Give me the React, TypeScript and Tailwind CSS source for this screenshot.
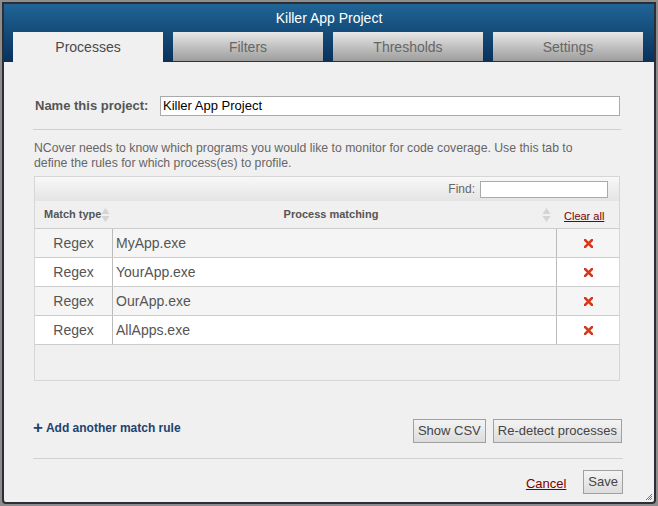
import React from "react";

const rows = ["MyApp.exe", "YourApp.exe", "OurApp.exe", "AllApps.exe"];
const tabs = ["Processes", "Filters", "Thresholds", "Settings"];

function SortArrows({ className = "" }: { className?: string }) {
  return (
    <svg width="9" height="16" viewBox="0 0 9 16" className={className}>
      <path d="M4.5 1 L8.5 7 L0.5 7 Z" fill="#d4d4d4" />
      <path d="M4.5 15 L8.5 9 L0.5 9 Z" fill="#d4d4d4" />
    </svg>
  );
}

function RedX() {
  return (
    <svg width="9" height="9" viewBox="0 0 9 9">
      <path d="M1 1 L8 8 M8 1 L1 8" stroke="#d63a1e" strokeWidth="2.6" strokeLinecap="square" />
    </svg>
  );
}

export default function App() {
  return (
    <div className="w-[658px] h-[506px] bg-[#8d8d8d] pl-[2px] pt-[2px] overflow-hidden" style={{ fontFamily: '"Liberation Sans", Arial, sans-serif' }}>
      <div className="w-[654px] h-[502px] border-2 border-[#2b2f35] rounded-b-[4px] bg-[#f0f0f0] flex flex-col relative overflow-hidden">
        {/* header */}
        <div className="h-[58px] bg-gradient-to-b from-[#1f6596] to-[#0a315c] flex flex-col">
          <div className="h-[28px] flex items-center justify-center text-white text-[14px]">Killer App Project</div>
          <div className="flex gap-[10px] pl-[9px] mt-auto">
            {tabs.map((t, i) => (
              <div
                key={t}
                className={
                  i === 0
                    ? "w-[150px] h-[30px] bg-[#f0f0f0] flex items-center justify-center pt-[1px] text-[14px] text-[#4a4a4a]"
                    : "w-[150px] h-[30px] bg-gradient-to-b from-[#e8e8e8] to-[#9d9d9d] border-b border-[#333] flex items-center justify-center pt-[2px] text-[14px] text-[#666]"
                }
              >
                {t}
              </div>
            ))}
          </div>
        </div>

        {/* body */}
        <div className="flex flex-col pl-[29px] pr-[31px]">
          <div className="flex items-center mt-[34px] pl-[2px]">
            <span className="text-[13px] font-bold text-[#555] w-[125px]">Name this project:</span>
            <div className="w-[460px] h-[20px] bg-white border border-[#aaa] flex items-center px-[2px] text-[13px] text-black">Killer App Project</div>
          </div>

          <div className="h-px bg-[#d0d0d0] mt-[13px] w-[588px]" />

          <p className="text-[12.25px] leading-[15px] text-[#666] mt-[11px] pl-[1px] w-[570px]">
            NCover needs to know which programs you would like to monitor for code coverage. Use this tab to define the rules for which process(es) to profile.
          </p>

          {/* table */}
          <div className="mt-[5px] ml-[1px] w-[586px] h-[205px] border border-[#d6d6d6] flex flex-col">
            <div className="h-[24px] bg-gradient-to-b from-[#f8f8f8] to-[#e4e4e4] flex items-center justify-end pr-[11px] gap-[5px]">
              <span className="text-[12px] text-[#666]">Find:</span>
              <div className="w-[128px] h-[17px] bg-white border border-[#aaa]" />
            </div>
            <div className="h-[28px] bg-[#f0f0f0] flex items-center border-b border-[#ccc] relative">
              <div className="w-[78px] pl-[9px] text-[11px] font-bold text-[#555] relative flex items-center">
                Match type
                <SortArrows className="absolute left-[66px]" />
              </div>
              <div className="flex-1 flex items-center justify-center text-[11px] font-bold text-[#555] relative">
                <span className="pr-[8px]">Process matching</span>
                <SortArrows className="absolute right-[6px]" />
              </div>
              <div className="w-[62px] flex justify-start pl-[7px]">
                <span className="text-[11px] text-[#7a0000] underline pt-[3px]">Clear all</span>
              </div>
            </div>
            {rows.map((r, i) => (
              <div key={r} className={`h-[29px] flex border-b border-[#ccc] ${i % 2 === 0 ? "bg-[#f5f5f5]" : "bg-white"}`}>
                <div className="w-[78px] flex items-center justify-center text-[14px] text-[#555] border-r border-[#bbb]">Regex</div>
                <div className="flex-1 flex items-center pl-[3px] text-[14px] text-[#555] border-r border-[#bbb]">{r}</div>
                <div className="w-[62px] flex items-center justify-center"><RedX /></div>
              </div>
            ))}
          </div>

          <div className="flex items-start mt-[38px]">
            <div className="flex items-center gap-[3px] text-[12px] font-bold text-[#1c4370]">
              <span className="text-[17px] leading-[12px] font-bold">+</span>
              <span>Add another match rule</span>
            </div>
            <div className="ml-auto mr-[1px] flex gap-[7px]">
              <div className="h-[24px] px-[4px] border border-[#a0a0a0] bg-gradient-to-b from-[#f4f4f4] to-[#dcdcdc] flex items-center text-[13px] text-[#444]">Show CSV</div>
              <div className="h-[24px] px-[4px] border border-[#a0a0a0] bg-gradient-to-b from-[#f4f4f4] to-[#dcdcdc] flex items-center text-[13px] text-[#444]">Re-detect processes</div>
            </div>
          </div>

          <div className="h-px bg-[#d0d0d0] mt-[15px] w-[590px]" />

          <div className="flex items-center justify-end mt-[11px] gap-[17px]">
            <span className="text-[13px] text-[#7a0000] underline mt-[4px]">Cancel</span>
            <div className="h-[24px] px-[4px] border border-[#a0a0a0] bg-gradient-to-b from-[#f4f4f4] to-[#dcdcdc] flex items-center text-[13px] text-[#444]">Save</div>
          </div>
        </div>

        {/* resize grip */}
        <svg width="8" height="8" viewBox="0 0 8 8" className="absolute right-[1px] bottom-[1px]">
          <path d="M7 1 L1 7 M7 3 L3 7 M7 5 L5 7" stroke="#777" strokeWidth="1" />
        </svg>
      </div>
    </div>
  );
}
